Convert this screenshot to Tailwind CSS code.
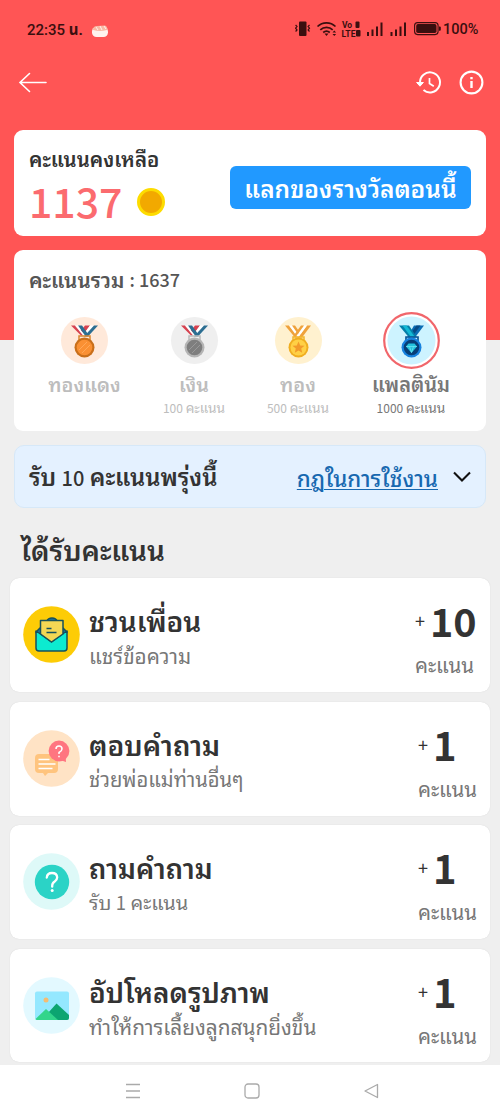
<!DOCTYPE html>
<html lang="th">
<head>
<meta charset="utf-8">
<title>คะแนน</title>
<script src="https://cdn.jsdelivr.net/npm/@tailwindcss/browser@4"></script>
</head>
<body class="bg-[#efefef]">
<div class="flex h-[1117px] w-[500px] flex-col overflow-hidden whitespace-nowrap bg-[linear-gradient(#ff5555_340px,#efefef_340px)] font-['Noto_Sans_CJK_SC','Noto_Sans_Thai_Looped','Noto_Sans_Thai','Noto_Sans',sans-serif] text-[#333]">

  <!-- Status bar -->
  <div class="flex h-[58px] shrink-0 items-center pl-[27px] pr-[21px] font-[Roboto,'Noto_Sans_Thai',sans-serif] text-[15px] font-medium leading-5 text-[#3a0f0f]">
    <span class="pt-[2px]">22:35 <b>น.</b></span>
    <svg class="ml-[9px] mt-[3px]" width="16" height="12" viewBox="0 0 16 12"><rect x="0" y="2" width="16" height="10" rx="4.5" fill="#fff3ee"/><path d="M1 5Q1 1 5 1L13 .5Q16 2 15 5Q8 7 1 5Z" fill="#f9b9a4"/><path d="M4 2l2 3M8 1l2 4M12 1l2 3" stroke="#fff" stroke-width=".8"/></svg>
    <svg class="ml-auto" width="146" height="18" viewBox="0 0 146 18" fill="#3a0f0f">
      <rect x="4" y="1.500" width="7.500" height="14.500" rx="1"/><path d="M.6 5l1.400 1.500-1.400 1.700 1.400 1.700-1.400 1.600M14.500 5l-1.400 1.500 1.400 1.700-1.400 1.700 1.400 1.600" fill="none" stroke="#3a0f0f" stroke-width="1.200"/>
      <g fill="none" stroke="#3a0f0f" stroke-width="1.700"><path d="M22.500 6.500a13 13 0 0 1 18 0M25.300 9.800a9 9 0 0 1 12.400 0M28.200 12.500a5 5 0 0 1 6.600 0"/></g><path d="M29.500 13.500h4l-2 2.500zM37.500 12.500l1.800-2 1.800 2zM37.500 14l1.800 2 1.800-2z"/>
      <text x="47" y="8" font-family="Roboto" font-size="8.500" font-weight="700">Vo</text><text x="46.500" y="16.500" font-family="Roboto" font-size="8.500" font-weight="700" textLength="14">LTE</text>
      <rect x="60.500" y="1.500" width="4" height="6.500" rx="1"/><rect x="61" y="10" width="4.500" height="6.500" rx="1"/>
      <path d="M72 12h2v4h-2zM76.500 9.500h2V16h-2zM81 6.500h2V16h-2zM85.500 2.500h2V16h-2zM95.500 12h2v4h-2zM100 9.500h2V16h-2zM104.500 6.500h2V16h-2zM109 2.500h2V16h-2z"/>
      <rect x="119.600" y="2.600" width="23.500" height="12" rx="3" fill="none" stroke="#3a0f0f" stroke-width="1.100"/><rect x="121.200" y="4.100" width="20.300" height="9" rx="1.800"/><path d="M144 6.500h.8q1 0 1 1v2.200q0 1-1 1H144z"/>
    </svg>
    <span class="ml-[2px] w-[36px] pt-px text-[14.500px]">100%</span>
  </div>

  <!-- App bar -->
  <div class="flex h-[72px] shrink-0 items-start px-[15px] pt-[10px]">
    <svg class="ml-[3px]" width="32" height="30" viewBox="0 0 32 30" fill="none" stroke="#fff" stroke-width="1.600" stroke-linecap="round"><path d="M2.500 14.500h25.500M11.500 5.500l-9.500 9 9.500 9"/></svg>
    <svg class="ml-auto" width="28" height="30" viewBox="0 0 28 30" fill="none" stroke="#fff" stroke-width="2"><path d="M5 14.800a10 10 0 1 1 3.500 7.200"/><path d="M1.600 14.500h6.800L5 18.200z" fill="#fff" stroke-width="1"/><path d="M14.500 10v5.500l4.300 2.700" stroke-width="1.700"/></svg>
    <svg class="ml-[14px]" width="28" height="30" viewBox="0 0 28 30"><circle cx="14.500" cy="14.500" r="10.900" fill="none" stroke="#fff" stroke-width="2.100"/><path d="M13.300 9h2.400v2.300h-2.400zM13.300 13h2.400v7h-2.400z" fill="#fff"/></svg>
  </div>

  <!-- Balance -->
  <section class="mx-[14px] flex h-[106px] shrink-0 rounded-[9px] bg-white">
    <div class="pl-[15px] pt-[15px]">
      <h2 class="h-[26px] text-[20.400px] font-semibold leading-[27px]">คะแนนคงเหลือ</h2>
      <div class="flex items-center">
        <span class="h-[58px] text-[41px] font-medium leading-[58px] text-[#fb6b6f]">1137</span>
        <span class="ml-[15px] mt-[3px] size-[28px] rounded-full border-[3px] border-[#fddc00] bg-[#f2a900]"></span>
      </div>
    </div>
    <button class="ml-auto mr-[15px] mt-[36px] h-[43px] w-[241px] rounded-[6px] bg-[#2199ff] text-[24.400px] font-semibold leading-[41px] text-white">แลกของรางวัลตอนนี้</button>
  </section>

  <!-- Levels -->
  <section class="mx-[14px] mt-[14px] h-[181px] shrink-0 rounded-[9px] bg-white pt-[15px]">
    <h2 class="flex h-[28px] gap-[5px] pl-[15px] text-[18px] font-medium leading-[28px] text-[#555]"><span class="text-[20.700px] font-semibold">คะแนนรวม</span><span>: 1637</span></h2>
    <div class="mt-[19px] flex pl-[15px] text-center text-[#bdbdbd]">
      <div class="flex w-[111px] flex-col items-center">
        <svg width="57" height="57" viewBox="0 0 57 57"><circle cx="28.500" cy="28.500" r="23.500" fill="#ffe9da"/><path d="M15 13.500h4l10 10h-4z" fill="#d64250"/><path d="M19 13.500h4l8 10h-4z" fill="#fff"/><path d="M29 13.500h5l-6 8-3-3z" fill="#d64250"/><path d="M34 13.500h4l-9 11h-3z" fill="#fff"/><path d="M38 13.500h4l-10 11h-4z" fill="#2c6e92"/><path d="M22 13.500h4l7 10h-4z" fill="#2c6e92"/><path d="M23 29v-5h11v5" fill="none" stroke="#d98630" stroke-width="1.500"/><circle cx="28.500" cy="35.500" r="10" fill="#c96f1a"/><circle cx="28.500" cy="35.500" r="7.800" fill="#fa9033"/><path d="M23 38l8-8M26 41l8-8" stroke="#ffa857"/></svg>
        <b class="h-[29px] text-[19.700px] font-semibold leading-[29px]">ทองแดง</b>
      </div>
      <div class="flex w-[108px] flex-col items-center">
        <svg width="57" height="57" viewBox="0 0 57 57"><circle cx="28.500" cy="28.500" r="23.500" fill="#efefef"/><path d="M15 13.500h4l10 10h-4z" fill="#d64250"/><path d="M19 13.500h4l8 10h-4z" fill="#fff"/><path d="M29 13.500h5l-6 8-3-3z" fill="#d64250"/><path d="M34 13.500h4l-9 11h-3z" fill="#fff"/><path d="M38 13.500h4l-10 11h-4z" fill="#2c6e92"/><path d="M22 13.500h4l7 10h-4z" fill="#2c6e92"/><path d="M23 29v-5h11v5" fill="none" stroke="#bbb" stroke-width="1.500"/><circle cx="28.500" cy="35.500" r="10" fill="#b5b5b5"/><circle cx="28.500" cy="35.500" r="7.800" fill="#7e7e7e"/><path d="M23 38l8-8M26 41l8-8" stroke="#999"/></svg>
        <b class="h-[29px] text-[19.700px] font-semibold leading-[29px]">เงิน</b>
        <span class="h-[18px] text-[12px] leading-[18px]">100 <span class="text-[13.700px]">คะแนน</span></span>
      </div>
      <div class="flex w-[100px] flex-col items-center">
        <svg width="57" height="57" viewBox="0 0 57 57"><circle cx="28.500" cy="28.500" r="23.500" fill="#fff1cf"/><path d="M15 13.500h4l10 12h-4z" fill="#efa23c"/><path d="M19 13.500h3l8 11h-3z" fill="#fff"/><path d="M22 13.500h3l7 10h-3z" fill="#efa23c"/><path d="M37 13.500h4l-9 12h-4z" fill="#efa23c"/><path d="M34 13.500h3l-8 11h-3z" fill="#fff"/><path d="M31 13.500h3l-8 11h-3z" fill="#efa23c"/><path d="M23 29v-4h11v4" fill="none" stroke="#f2b52c" stroke-width="1.500"/><circle cx="28.500" cy="35.500" r="10" fill="#f0ae20"/><circle cx="28.500" cy="35.500" r="8" fill="#ffd045"/><path d="M28.500 29.500l1.700 4 4.300.3-3.300 2.800 1 4.200-3.700-2.200-3.700 2.200 1-4.200-3.300-2.800 4.300-.3z" fill="#f29a2a"/></svg>
        <b class="h-[29px] text-[19.700px] font-semibold leading-[29px]">ทอง</b>
        <span class="h-[18px] text-[12px] leading-[18px]">500 <span class="text-[13.700px]">คะแนน</span></span>
      </div>
      <div class="flex w-[126px] flex-col items-center text-[#777]">
        <svg width="57" height="57" viewBox="0 0 57 57"><circle cx="28.500" cy="28.500" r="27.300" fill="#fff" stroke="#f1666b" stroke-width="2.200"/><circle cx="28.500" cy="28.500" r="24" fill="#cdf3ff"/><path d="M31 13.500h10l-9 12h-8z" fill="#0a6db6"/><path d="M33.500 13.500h4l-8 11h-4z" fill="#064a86"/><path d="M16 13.500h10l8 12h-8z" fill="#047fa9"/><path d="M19.500 13.500h4l8 11h-4z" fill="#12b9d5"/><path d="M23 29v-4h12v4" fill="none" stroke="#0a5799" stroke-width="1.700"/><circle cx="28.500" cy="35.500" r="10" fill="#1682df"/><circle cx="28.500" cy="35.500" r="7.800" fill="#063f77"/><path d="M25.500 31.500h6l2.500 3-5.500 6.500-5.500-6.500z" fill="#23c2dd"/><path d="M23 34.500h11M26.500 34.500l2 6 2-6" fill="none" stroke="#77e8f4" stroke-width=".7"/></svg>
        <b class="h-[29px] text-[20px] font-semibold leading-[29px]">แพลตินัม</b>
        <span class="h-[18px] text-[12px] leading-[18px]">1000 <span class="text-[13.700px]">คะแนน</span></span>
      </div>
    </div>
  </section>

  <!-- Rules -->
  <section class="mx-[14px] mt-[14px] flex h-[63px] shrink-0 items-center rounded-[10px] border border-[#d6e8f8] bg-[#e4f1ff] pl-[14px] pr-[13px]">
    <span class="text-[23.700px] font-semibold leading-[34px]">รับ <span class="text-[20px] font-medium">10</span> คะแนนพรุ่งนี้</span>
    <a class="ml-auto text-[22.400px] font-medium leading-[34px] text-[#1768b0] underline decoration-1 underline-offset-2">กฎในการใช้งาน</a>
    <svg class="ml-[14px]" width="20" height="14" viewBox="0 0 20 14" fill="none" stroke="#111" stroke-width="2.100"><path d="M2 2.500l8 8 8-8"/></svg>
  </section>

  <h1 class="h-[70px] shrink-0 pl-[21px] pt-[21px] text-[27.900px] font-semibold leading-[40px]">ได้รับคะแนน</h1>

  <!-- Tasks -->
  <ul class="mx-[10px] flex shrink-0 flex-col gap-[9.700px]">
    <li class="flex h-[114px] rounded-[9px] bg-white pl-[13px] shadow-[0_0_1px_#ccc]">
      <svg class="mt-[28px]" width="57" height="57" viewBox="0 0 57 57"><circle cx="28.500" cy="28.500" r="28.300" fill="#fdcc06"/><g stroke="#16505c" stroke-width="1.500" stroke-linejoin="round"><path d="M24 15q1-3 5-3t5 3z" fill="#1778a9"/><path d="M13 26l4-4h23l4 4-7 10H19z" fill="#1778a9"/><path d="M13 25l4.500 3L28.500 36l11-8 4.500-3v17q0 3-3 3H16q-3 0-3-3z" fill="#0cebd0"/><path d="M17.500 14.500h22.500v13.500l-11.500 8-11-8z" fill="#f4d754"/></g><path d="M23.500 22.500h5M23.500 26.500h10" stroke="#16505c" stroke-width="1.400"/></svg>
      <div class="ml-[9px] pt-[24px]">
        <h3 class="h-[36px] text-[27.900px] font-semibold leading-[36px]">ชวนเพื่อน</h3>
        <p class="h-[34px] text-[20.700px] leading-[34px] text-[#777]">แชร์ข้อความ</p>
      </div>
      <div class="ml-auto w-[75px]">
        <div class="mt-[12px] flex h-[62px] leading-[60px]"><span class="w-[15px] text-[18px]">+</span><span class="text-[39.500px] font-semibold">10</span></div>
        <p class="h-[28px] text-[20.500px] leading-[25px] text-[#777]">คะแนน</p>
      </div>
    </li>
    <li class="flex h-[114px] rounded-[9px] bg-white pl-[13px] shadow-[0_0_1px_#ccc]">
      <svg class="mt-[28px]" width="57" height="57" viewBox="0 0 57 57"><circle cx="28.500" cy="28.500" r="28.300" fill="#ffe3c5"/><path d="M16 24h15q4 0 4 4v11q0 4-4 4h-6l-3 3-2-3h-4q-4 0-4-4V28q0-4 4-4z" fill="#ffc47e"/><path d="M15.500 29.500h11M15.500 34h17M15.500 38.500h14" stroke="#fff" stroke-width="1.500"/><circle cx="36" cy="21" r="10.400" fill="#ff7580"/><path d="M37 30l6 2-.5-7z" fill="#ff7580"/><path d="M33 19q0-3 3-3t3 3q0 1.800-3 3.500v1.500M36 25.700v1.500" fill="none" stroke="#fff" stroke-width="1.500"/></svg>
      <div class="ml-[9px] pt-[24px]">
        <h3 class="h-[36px] text-[27.900px] font-semibold leading-[36px]">ตอบคำถาม</h3>
        <p class="h-[34px] text-[20.200px] leading-[34px] text-[#777]">ช่วยพ่อแม่ท่านอื่นๆ</p>
      </div>
      <div class="ml-auto w-[72px]">
        <div class="mt-[12px] flex h-[62px] leading-[60px]"><span class="w-[15px] text-[18px]">+</span><span class="text-[40px] font-semibold">1</span></div>
        <p class="h-[28px] text-[20.500px] leading-[25px] text-[#777]">คะแนน</p>
      </div>
    </li>
    <li class="flex h-[114px] rounded-[9px] bg-white pl-[13px] shadow-[0_0_1px_#ccc]">
      <svg class="mt-[28px]" width="57" height="57" viewBox="0 0 57 57"><circle cx="28.500" cy="28.500" r="28.300" fill="#def9f8"/><circle cx="29" cy="29" r="17.200" fill="#2bd3c6"/><path d="M23.800 24.500q.4-4.500 5.200-4.500t5.200 4.300q0 2.500-2.500 4.200-2.500 1.500-2.500 4.200v1" fill="none" stroke="#fff" stroke-width="2.300" stroke-linecap="round"/><circle cx="29.200" cy="37.500" r="1.500" fill="#fff"/></svg>
      <div class="ml-[9px] pt-[24px]">
        <h3 class="h-[36px] text-[27.700px] font-semibold leading-[36px]">ถามคำถาม</h3>
        <p class="h-[34px] text-[20px] leading-[34px] text-[#777]">รับ <span class="text-[18.500px]">1</span> คะแนน</p>
      </div>
      <div class="ml-auto w-[72px]">
        <div class="mt-[12px] flex h-[62px] leading-[60px]"><span class="w-[15px] text-[18px]">+</span><span class="text-[40px] font-semibold">1</span></div>
        <p class="h-[28px] text-[20.500px] leading-[25px] text-[#777]">คะแนน</p>
      </div>
    </li>
    <li class="flex h-[113px] rounded-[9px] bg-white pl-[13px] shadow-[0_0_1px_#ccc]">
      <svg class="mt-[28px]" width="57" height="57" viewBox="0 0 57 57"><circle cx="28.500" cy="28.500" r="28.300" fill="#e3f9ff"/><rect x="12" y="14.500" width="34" height="28.500" rx="2" fill="#94e8ff"/><circle cx="23" cy="23" r="2.500" fill="#f5bc72"/><path d="M25 36l8.500-9.500L46 38v3q0 2-2 2H30z" fill="#0ca571"/><path d="M12.500 42L23 32l12 11H14q-1 0-1.500-1z" fill="#32d58b"/></svg>
      <div class="ml-[9px] pt-[24px]">
        <h3 class="h-[36px] text-[27.800px] font-semibold leading-[36px]">อัปโหลดรูปภาพ</h3>
        <p class="h-[34px] text-[20.800px] leading-[34px] text-[#777]">ทำให้การเลี้ยงลูกสนุกยิ่งขึ้น</p>
      </div>
      <div class="ml-auto w-[72px]">
        <div class="mt-[12px] flex h-[62px] leading-[60px]"><span class="w-[15px] text-[18px]">+</span><span class="text-[40px] font-semibold">1</span></div>
        <p class="h-[28px] text-[20.500px] leading-[25px] text-[#777]">คะแนน</p>
      </div>
    </li>
  </ul>

  <!-- System navigation -->
  <nav class="mt-auto flex h-[52px] shrink-0 items-center justify-between bg-white pl-[125px] pr-[121px]">
    <svg width="16" height="18" viewBox="0 0 16 18" stroke="#aaa" stroke-width="1.300"><path d="M1 2.500h14M1 9h14M1 15.500h14"/></svg>
    <svg width="16" height="16" viewBox="0 0 16 16" fill="none" stroke="#aaa" stroke-width="1.300"><rect x="1" y="1" width="14" height="14" rx="3"/></svg>
    <svg width="16" height="16" viewBox="0 0 16 16" fill="none" stroke="#aaa" stroke-width="1.300" stroke-linejoin="round"><path d="M14.500 1.500v13L2 8z"/></svg>
  </nav>
</div>
</body>
</html>
